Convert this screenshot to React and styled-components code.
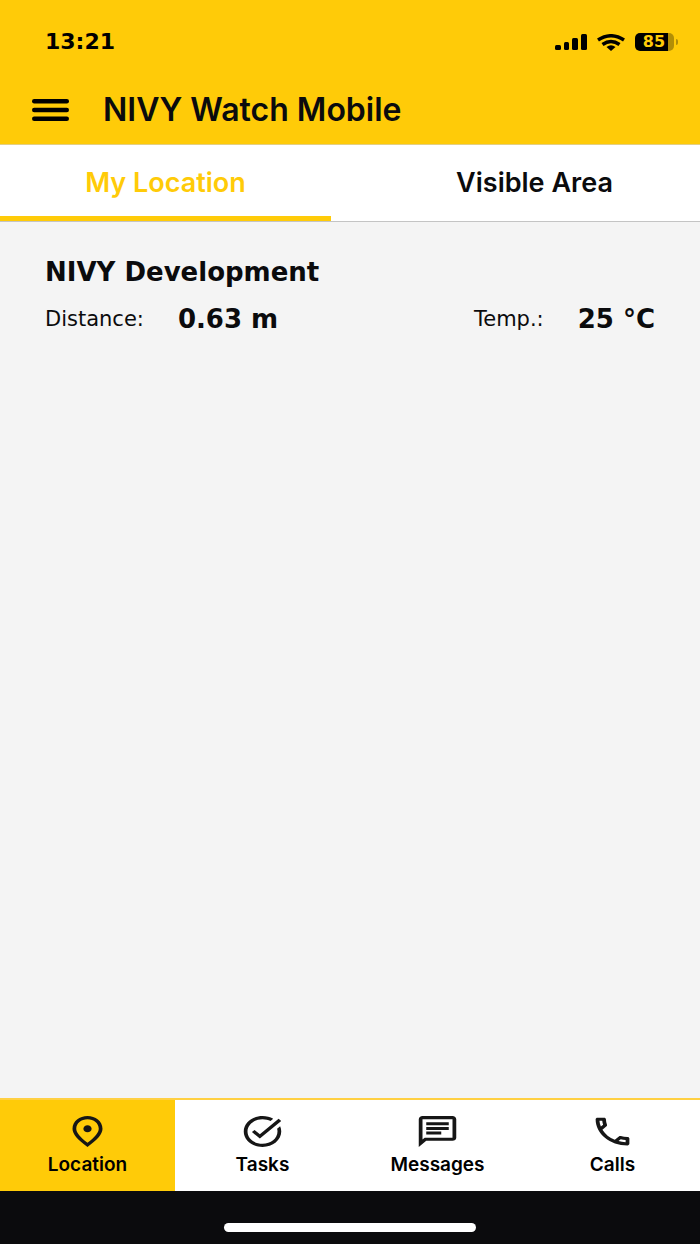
import React from "react";
import styled, { createGlobalStyle } from "styled-components";

const ink = "#0b0b0d";
const yellow = "#ffcb08";
const wideFont = '"DejaVu Sans", Verdana, sans-serif';

const GlobalStyle = createGlobalStyle`
  * { box-sizing: border-box; }
  body {
    margin: 0;
    background: #f4f4f4;
    color: ${ink};
    font-family: Inter, "Liberation Sans", sans-serif;
  }
`;

const Screen = styled.div`
  display: flex;
  flex-direction: column;
  min-height: 100vh;
`;

const Header = styled.header`
  background: ${yellow};
  border-bottom: 1px solid #e3cf84;
`;

const StatusBar = styled.div`
  display: flex;
  align-items: center;
  justify-content: space-between;
  height: 84px;
  padding: 0 22px 0 45px;
  color: #000;
`;

const Clock = styled.time`
  font-family: ${wideFont};
  font-size: 22px;
  line-height: 28px;
  font-weight: 700;
`;

const StatusIcons = styled.div`
  display: flex;
  align-items: center;
  gap: 10px;
`;

const Battery = styled.div`
  display: flex;
  align-items: center;
  gap: 2px;
`;

const BatteryBody = styled.div`
  width: 39px;
  height: 18px;
  padding-right: 1px;
  border-radius: 5px;
  background: linear-gradient(90deg, #000 85%, #b28e06 85%);
  color: ${yellow};
  font-family: ${wideFont};
  font-size: 16px;
  line-height: 18px;
  font-weight: 700;
  text-align: center;
`;

const BatteryTip = styled.div`
  width: 2px;
  height: 6px;
  border-radius: 0 2px 2px 0;
  background: #b28e06;
`;

const AppBar = styled.div`
  display: flex;
  align-items: center;
  gap: 34px;
  height: 60px;
  padding: 0 32px 8px;
`;

const MenuButton = styled.button`
  display: flex;
  padding: 0;
  border: 0;
  background: none;
  color: inherit;
`;

const Title = styled.h1`
  margin: 0;
  font-size: 32px;
  line-height: 36px;
  font-weight: 600;
`;

const Tabs = styled.div`
  display: grid;
  grid-template-columns: 1fr 1fr;
  column-gap: 38px;
  height: 77px;
  background: #fff;
  border-bottom: 1px solid #c4c4c4;
`;

const Tab = styled.button`
  padding: 5px 0 0;
  border: 0;
  border-bottom: 5px solid ${(p) => (p.$active ? yellow : "transparent")};
  background: none;
  color: ${(p) => (p.$active ? yellow : ink)};
  font-family: inherit;
  font-size: 27px;
  line-height: 32px;
  font-weight: 600;
`;

const Main = styled.main`
  flex: 1;
  padding: 32px 45px;
`;

const SiteName = styled.h2`
  margin: 0;
  font-family: ${wideFont};
  font-size: 26px;
  line-height: 36px;
  font-weight: 700;
`;

const Readings = styled.dl`
  display: flex;
  justify-content: space-between;
  margin: 11px 0 0;
  font-family: ${wideFont};
`;

const Reading = styled.div`
  display: flex;
  align-items: center;
  gap: 34px;
`;

const Label = styled.dt`
  font-size: 21px;
  line-height: 36px;
  font-weight: 400;
`;

const Value = styled.dd`
  margin: 0;
  font-size: 26px;
  line-height: 36px;
  font-weight: 700;
`;

const BottomNav = styled.nav`
  display: grid;
  grid-template-columns: repeat(4, 1fr);
  height: 93px;
  background: #fff;
  border-top: 2px solid #ffd042;
`;

const NavItem = styled.a`
  display: flex;
  flex-direction: column;
  align-items: center;
  gap: 3px;
  padding-top: 13px;
  background: ${(p) => (p.$active ? yellow : "#fff")};
  color: #000;
  text-decoration: none;
  font-size: 19px;
  line-height: 24px;
  font-weight: 600;
`;

const NavIcon = styled.svg`
  display: block;
  width: 45px;
  height: 37px;
  fill: #161616;
`;

const HomeArea = styled.footer`
  display: flex;
  justify-content: center;
  height: 53px;
  padding-top: 32px;
  background: ${ink};
`;

const HomeIndicator = styled.div`
  width: 36%;
  height: 9px;
  border-radius: 5px;
  background: #fff;
`;

const navItems = [
  {
    label: "Location",
    active: true,
    path: "M12 12.500c-1.200 0-2.200-1-2.200-2.300s1-2.300 2.200-2.300 2.200 1 2.200 2.300-1 2.300-2.200 2.300zm6-2.300C18 6.57 15.35 4 12 4s-6 2.57-6 6.2c0 2.34 1.95 5.44 6 9.14 4.05-3.7 6-6.8 6-9.14zM12 2c4.2 0 8 3.22 8 8.2 0 3.32-2.67 7.25-8 11.8-5.33-4.55-8-8.48-8-11.8C4 5.22 7.8 2 12 2z",
  },
  {
    label: "Tasks",
    path: "M22 5.18 10.59 16.6l-4.24-4.24 1.41-1.41 2.83 2.83 10-10L22 5.18zm-2.21 5.04c.13.57.21 1.17.21 1.78 0 4.42-3.58 8-8 8s-8-3.58-8-8 3.58-8 8-8c1.58 0 3.04.46 4.28 1.25l1.44-1.44C16.1 2.67 14.13 2 12 2 6.48 2 2 6.48 2 12s4.48 10 10 10 10-4.48 10-10c0-1.19-.22-2.33-.6-3.39l-1.61 1.61z",
  },
  {
    label: "Messages",
    path: "M4 4h16v12H5.17L4 17.17V4m0-2c-1.1 0-1.99.9-1.99 2L2 22l4-4h14c1.1 0 2-.9 2-2V4c0-1.1-.9-2-2-2H4zm2 10h8v2H6v-2zm0-3h12v2H6V9zm0-3h12v2H6V6z",
  },
  {
    label: "Calls",
    path: "M6.54 5c.06.89.21 1.76.45 2.59l-1.2 1.2c-.41-1.2-.67-2.47-.76-3.79h1.51m9.86 12.02c.85.24 1.72.39 2.6.45v1.49c-1.32-.09-2.59-.35-3.8-.75l1.2-1.19M7.5 3H4c-.55 0-1 .45-1 1 0 9.39 7.61 17 17 17 .55 0 1-.45 1-1v-3.49c0-.55-.45-1-1-1-1.24 0-2.45-.2-3.57-.57-.1-.04-.21-.05-.31-.05-.26 0-.51.1-.71.29l-2.2 2.2c-2.83-1.45-5.15-3.76-6.59-6.59l2.2-2.2c.28-.28.36-.67.25-1.02C8.7 6.45 8.5 5.25 8.5 4c0-.55-.45-1-1-1z",
  },
];

const SignalIcon = () => (
  <svg width="32" height="16" viewBox="0 0 32 16" aria-hidden="true">
    <rect x="0" y="11" width="6" height="5" rx="1.5" />
    <rect x="9" y="8" width="5" height="8" rx="1.5" />
    <rect x="17" y="4" width="6" height="12" rx="1.5" />
    <rect x="26" y="0" width="6" height="16" rx="1.5" />
  </svg>
);

const WifiIcon = () => (
  <svg width="28" height="17" viewBox="0 0 28 17" fill="none" stroke="#000" strokeWidth="3.5" aria-hidden="true">
    <path d="M1 6Q14 -2.500 27 6" />
    <path d="M5.500 10.500Q14 4.500 22.500 10.500" />
    <path d="M9.500 13Q14 9.500 18.500 13L14 17Z" fill="#000" stroke="none" />
  </svg>
);

export default function App() {
  return (
    <>
      <GlobalStyle />
      <Screen>
        <Header>
          <StatusBar>
            <Clock>13:21</Clock>
            <StatusIcons>
              <SignalIcon />
              <WifiIcon />
              <Battery>
                <BatteryBody>85</BatteryBody>
                <BatteryTip />
              </Battery>
            </StatusIcons>
          </StatusBar>
          <AppBar>
            <MenuButton aria-label="Menu">
              <svg width="37" height="22" viewBox="0 0 37 22" aria-hidden="true">
                <rect x="0" y="0" width="37" height="4.500" rx="2.200" />
                <rect x="0" y="8.800" width="37" height="4.500" rx="2.200" />
                <rect x="0" y="17.500" width="37" height="4.500" rx="2.200" />
              </svg>
            </MenuButton>
            <Title>NIVY Watch Mobile</Title>
          </AppBar>
        </Header>
        <Tabs role="tablist">
          <Tab role="tab" aria-selected="true" $active>My Location</Tab>
          <Tab role="tab" aria-selected="false">Visible Area</Tab>
        </Tabs>
        <Main>
          <SiteName>NIVY Development</SiteName>
          <Readings>
            <Reading>
              <Label>Distance:</Label>
              <Value>0.63 m</Value>
            </Reading>
            <Reading>
              <Label>Temp.:</Label>
              <Value>25 °C</Value>
            </Reading>
          </Readings>
        </Main>
        <BottomNav>
          {navItems.map((item) => (
            <NavItem key={item.label} href="#" $active={item.active}>
              <NavIcon viewBox="0 0 24 24" preserveAspectRatio="none" aria-hidden="true">
                <path d={item.path} />
              </NavIcon>
              {item.label}
            </NavItem>
          ))}
        </BottomNav>
        <HomeArea>
          <HomeIndicator />
        </HomeArea>
      </Screen>
    </>
  );
}
